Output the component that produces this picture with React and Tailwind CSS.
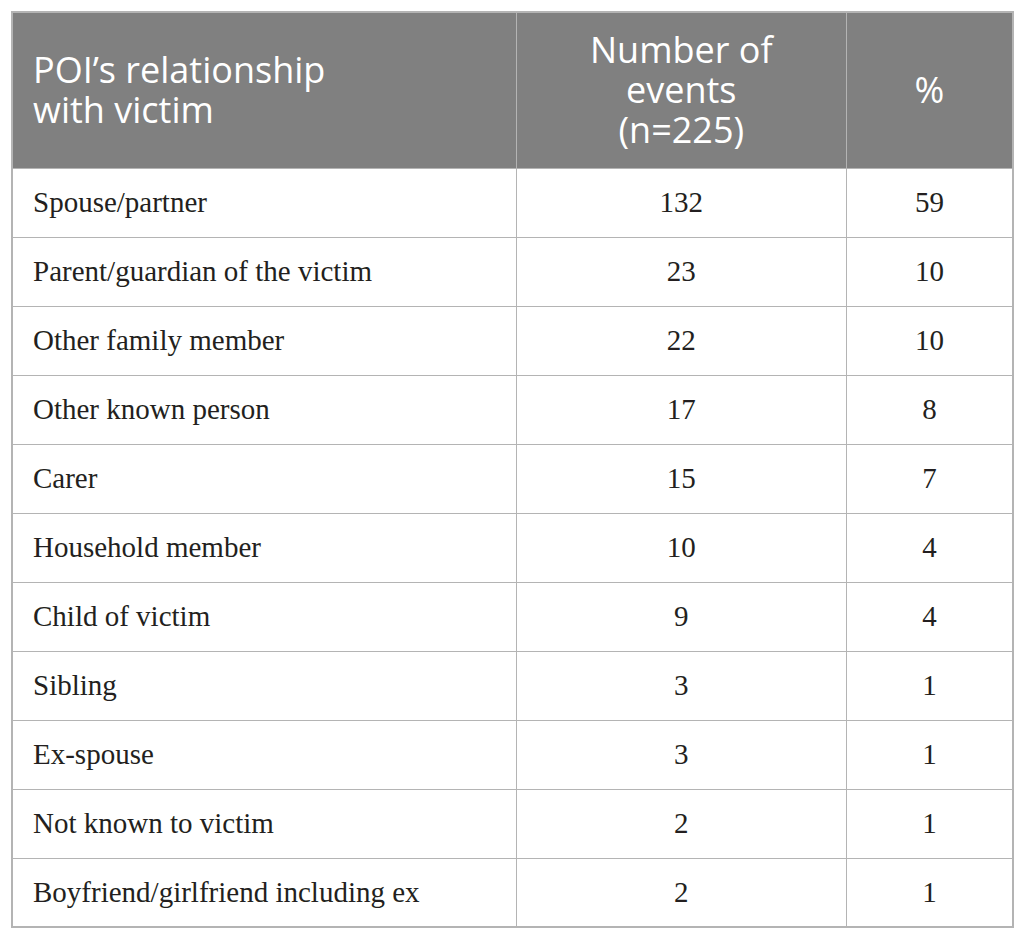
const rows = [
  ['Spouse/partner', '132', '59'],
  ['Parent/guardian of the victim', '23', '10'],
  ['Other family member', '22', '10'],
  ['Other known person', '17', '8'],
  ['Carer', '15', '7'],
  ['Household member', '10', '4'],
  ['Child of victim', '9', '4'],
  ['Sibling', '3', '1'],
  ['Ex-spouse', '3', '1'],
  ['Not known to victim', '2', '1'],
  ['Boyfriend/girlfriend including ex', '2', '1'],
];

const App = () => {
  return (
    <div className="bg-white w-[1025px] h-[940px] pt-[11px] pl-[11px]">
      <table className="w-[1003px] border-collapse border-2 border-[#b4b4b4]">
        <colgroup>
          <col className="w-[505px]" />
          <col className="w-[331px]" />
          <col className="w-[167px]" />
        </colgroup>
        <thead>
          <tr className="h-[156px] bg-[#808080] text-white text-[36px] leading-[40px] font-['Open_Sans',sans-serif]">
            <th className="text-left font-normal pl-[20px] pr-4 border-r border-[#b4b4b4]">
              POI’s relationship
              <br />
              with victim
            </th>
            <th className="font-normal text-center border-r border-[#b4b4b4]">
              Number of
              <br />
              events
              <br />
              (n=225)
            </th>
            <th className="font-normal text-center">%</th>
          </tr>
        </thead>
        <tbody className="text-[29px] text-[#231f20] font-['Liberation_Serif',serif]">
          {rows.map((r, i) => (
            <tr key={i} className="h-[69px] border-t border-[#b4b4b4]">
              <td className="pl-[20px] border-r border-[#b4b4b4]">{r[0]}</td>
              <td className="text-center border-r border-[#b4b4b4]">{r[1]}</td>
              <td className="text-center">{r[2]}</td>
            </tr>
          ))}
        </tbody>
      </table>
    </div>
  );
};

export default App;
